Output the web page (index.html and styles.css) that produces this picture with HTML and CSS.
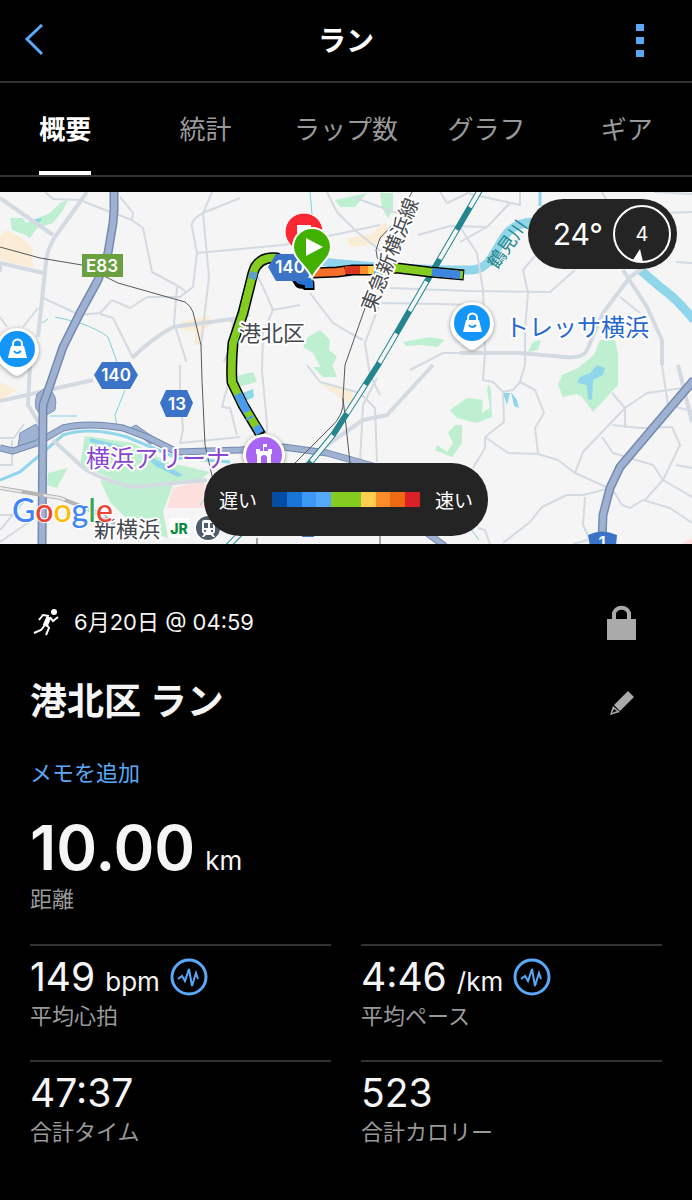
FILE: index.html
```html
<!DOCTYPE html>
<html lang="ja">
<head>
  <meta charset="UTF-8">
  <meta name="viewport" content="width=device-width, initial-scale=1.0">
  <title>ラン</title>
  <link rel="stylesheet" href="styles.css">
</head>
<body>
  <header class="topbar">
    <button class="icon-btn back" aria-label="戻る">
      <svg width="20" height="34" viewBox="0 0 20 34"><path d="M18 1 3 15l15 15" fill="none" stroke="#5aa9f8" stroke-width="3"/></svg>
    </button>
    <h1>ラン</h1>
    <button class="icon-btn more" aria-label="メニュー">
      <svg width="8" height="34" viewBox="0 0 8 34" fill="#5aa9f8"><path d="M0 0h8v7H0zM0 13h8v7H0zM0 26h8v7H0z"/></svg>
    </button>
  </header>

  <nav class="tabs">
    <a href="#summary" class="active">概要</a>
    <a href="#stats">統計</a>
    <a href="#laps">ラップ数</a>
    <a href="#graph">グラフ</a>
    <a href="#gear">ギア</a>
  </nav>

  <section class="map">
    <svg class="map-canvas" viewBox="0 192 692 352">
      <rect y="192" width="692" height="352" fill="#f5f5f6"/>

      <!-- parks and built-up areas -->
      <g fill="#fbecd5">
        <path d="M5 230 20 237 32 247 33 268 0 260V236zM0 382 17 390 0 400zM347 238 372 234 385 222 390 230 375 245 350 247zM181 322 210 315 210 326 202 330 200 345 195 345V331L181 330zM320 384 352 390 354 408 335 394z"/>
      </g>
      <g fill="#bfefd1">
        <path d="M10 218 23 218 26 223 50 213 60 203 68 200 63 210 53 223 37 228 30 238 23 234 12 230z"/>
        <path d="M85 436 133 443 167 462 210 472 200 480 133 488 80 465z"/>
        <path d="M100 480 133 488 173 485 163 512 168 538 133 525 110 502z"/>
        <path d="M48 473 68 468 60 482 57 488 47 485z"/>
        <path d="M335 200 367 193 355 207 340 207zM380 193H393V210L388 218 382 208z"/>
        <path d="M308 337 320 330 330 340 329 350 337 357 330 370 321 368 313 353 303 347z"/>
        <path d="M403 342 430 337 445 340 437 347 422 345 406 346z"/>
        <path d="M313 367H333L337 377 323 377zM228 378 253 372 257 382 237 387z"/>
        <path d="M600 340H615L618 353V385L593 412 582 397 577 394 563 397 558 385 562 375 578 368 594 355z"/>
        <path d="M533 342 541 340 538 350 528 352z"/>
        <path d="M467 398 483 400 482 413 490 408 487 390 489 384 491 390 492 417 477 423 457 418 450 410z"/>
        <path d="M455 425H462V443L452 457 435 450 437 445 447 452 453 443 448 433z"/>
      </g>
      <path d="M173 488 205 480V508H167z" fill="#fde0de"/>
      <path d="M681 544 692 538V544z" fill="#fde0de"/>

      <!-- water -->
      <g fill="#8fd6eb">
        <path d="M597 365 605 368 603 375 593 380 592 400 588 399 587 385 577 383 580 377 590 373z"/>
        <path d="M503 393H510L507 405zM511 392 517 400 519 408 514 406z"/>
        <path d="M90 438 127 447 126 450 90 442zM140 450 183 475 178 477 155 466zM240 394 253 389 254 397 243 402zM35 219 42 218 40 222 35 223z"/>
      </g>
      <g fill="none" stroke="#8fd6eb">
        <path d="M276 260Q310 257 330 263L377 267 443 270 470 270Q484 270 492 257L504 237Q512 224 532 222" stroke-width="9"/>
        <path d="M638 268 660 287Q675 297 694 320" stroke-width="9"/>
        <path d="M540 192V206M0 480 20 472 40 455 63 435Q90 426 127 437L177 458 230 462" stroke-width="3"/>
        <path d="M310 192 312 214M42 323 48 319M55 317 77 322Q100 330 108 337L117 362M125 390 115 415 117 427M50 416H77M248 275Q236 320 227 350M200 505 212 490M456 525 470 528 479 540" stroke="#7fd3da" stroke-width="1"/>
      </g>

      <!-- streets -->
      <g fill="none" stroke="#d3dae1" stroke-width="2" stroke-linejoin="round">
        <path d="M45 192 53 199 80 200 100 208 132 220 143 228 152 272 180 287 187 293"/>
        <path d="M120 197 125 203 133 213 132 220M0 317 7 327M23 327 38 308"/>
        <path d="M240 198 203 213Q190 220 192 227L197 253 193 287 180 297 147 297 130 308 112 300 100 313 80 315 43 298"/>
        <path d="M197 253 283 245 343 233 380 225M100 314 113 318 133 358M177 287 174 323 185 357 186 362"/>
        <path d="M212 192 203 213 209 277 201 345M233 320 231 345 224 362M233 365 222 407 230 408 237 435"/>
        <path d="M327 192 337 212 357 232 382 252M353 197 397 213 418 202M440 192 447 203 470 192M418 235 450 226 487 227"/>
        <path d="M250 262 263 287 273 310 263 333 262 370 267 425 266 440M230 322 250 315M273 310 300 305"/>
        <path d="M310 293 333 323 350 333 363 340M470 305 440 304 380 303 365 343 370 375 380 395"/>
        <path d="M390 288 470 291 550 292 575 270M410 370 443 353 460 353"/>
        <path d="M307 365 320 382 360 393 375 408 377 462M377 378 363 405 360 463"/>
        <path d="M460 242 487 227 510 203M470 194 520 205V192M460 227 477 253 483 290 485 353 483 380 493 382 503 392 504 422 485 437 485 448 473 468"/>
        <path d="M540 250 523 270 528 293 525 330 525 365 520 382 513 390 503 392M520 382 535 390 544 413 535 428 538 453"/>
        <path d="M485 437 508 453 538 454 558 460 575 473 613 490 622 505 630 508 643 500 670 508 692 523"/>
        <path d="M575 473 583 452 625 408 647 393 683 388M612 393 625 408V428M612 425 640 428 672 427 680 445 663 480 645 500"/>
        <path d="M602 437 613 453 653 465 663 480 692 497M676 465 692 468M668 405 692 411"/>
        <path d="M503 543 530 522 542 507 567 495 583 495 611 488M585 497 583 525 590 540M573 544 588 540"/>
        <path d="M662 365 668 405M654 192 692 194M660 213 692 212M676 262 692 263M620 297 640 313M602 192 608 203M478 528 485 530 490 544"/>
        <path d="M0 438H14L24 424M0 465H12V440M0 530 25 500M0 515H16M180 365V392L183 430 180 443 240 437M0 542 32 520"/>
      </g>
      <g fill="none" stroke="#d3dae1" stroke-width="4" stroke-linejoin="round">
        <path d="M87 192 55 237Q47 250 46 262L38 337M30 365 28 405 42 428M0 198 20 212 53 235"/>
        <path d="M0 263 43 273M132 358Q150 340 173 327L240 318M0 401 93 380M0 263V272"/>
        <path d="M53 440 77 462Q90 477 133 487L207 480M643 268 630 277 603 313 587 350Q583 359 565 357L520 353 460 353"/>
        <path d="M433 365 387 415 363 420 327 445 300 470M623 270 647 307 662 340V365M678 365 692 422M470 353H485"/>
      </g>

      <!-- expressways -->
      <g fill="none" stroke-linejoin="round">
        <path d="M45 388q14 4 10 22l-10 6q-14-4-8-22zM20 433 36 424 44 436 38 443 18 446zM130 428 136 425 160 442 150 444z" fill="#9fb2d1" stroke="#7d92b8"/>
        <path class="road-edge" d="M0 448 13 451 37 443 63 428Q87 422 123 428L147 437 177 452 240 450 283 447 327 453 380 468 420 528 445 546"/>
        <path class="road-fill" d="M0 448 13 451 37 443 63 428Q87 422 123 428L147 437 177 452 240 450 283 447 327 453 380 468 420 528 445 546"/>
        <path class="road-edge wide" d="M114 190V210L113 223 108 253 98 280 80 313 63 347 50 385 43 405 42 546"/>
        <path class="road-fill wide" d="M114 190V210L113 223 108 253 98 280 80 313 63 347 50 385 43 405 42 546"/>
        <path class="road-edge wide" d="M694 380 670 408 620 467 610 488 603 515 602 540"/>
        <path class="road-fill wide" d="M694 380 670 408 620 467 610 488 603 515 602 540"/>
      </g>

      <!-- railways -->
      <g fill="none">
        <path d="M0 247 40 258 82 265 118 283 185 302Q191 306 193 312L201 345 202 380 205 445 213 480M412 192 397 220 380 238 376 250 378 262M365 308 345 365 343 398Q345 415 330 428L295 463M343 398 350 463M380 536V544M257 538V544" stroke="#55585c"/>
        <path d="M0 488 60 498 100 514 140 540" stroke="#b5b5b5" stroke-width="4"/>
        <path d="M0 488 60 498 100 514 140 540" stroke="#eee" stroke-width="2" stroke-dasharray="22 22"/>
        <path d="M480 190 378 365 333 435 310 463 228 546" stroke="#23868f" stroke-width="6"/>
        <path d="M480 190 378 365 333 435 310 463 228 546" stroke="#f5f5f6" stroke-width="4" stroke-dasharray="34 26" stroke-dashoffset="14"/>
      </g>

      <!-- recorded track -->
      <g fill="none" stroke-linejoin="round">
        <path d="M464 275 430 272 397 268 373 270 353 270 337 272 312 273M309 290V284L300 283 289 266 277 258Q258 256 253 273L243 313 233 343Q231 365 232 382L243 405 261 435" stroke="#000" stroke-width="11"/>
        <g stroke-width="8">
          <path d="M463 275 430 272 397 268 373 270" stroke="#84cd20"/>
          <path d="M460 275 432 272" stroke="#3d85e0"/>
          <path d="M386 269 373 270" stroke="#54a9fb"/>
          <path d="M374 270H366" stroke="#ffce4e"/>
          <path d="M368 270H360" stroke="#fb8c2a"/>
          <path d="M360 270H345" stroke="#d9341f"/>
          <path d="M345 271 337 272 312 273" stroke="#f4702a"/>
          <path d="M309 288V282L300 280 289 268" stroke="#2472d2"/>
          <path d="M289 266 277 258Q258 256 253 273L243 313 233 343Q231 365 232 382L243 405 260 433" stroke="#84cd20"/>
          <path d="M238 394 247 412M249 417 250 419M256 426 260 433" stroke="#4b9af2"/>
          <path d="M254 272 252 279" stroke="#5d9ec8"/>
        </g>
      </g>

      <!-- road numbers -->
      <path d="M82 254H123V277H82z" fill="#6aa03f"/>
      <g fill="#3b74c6">
        <path d="M102 362H130L138 375 130 389H102L94 375zM166 390H187L193 403 187 417H166L160 403zM276 254H306L314 267 306 281H276L268 267zM588 535Q602 528 617 535L616 546H590zM302 533H314V537H302z"/>
      </g>
      <g class="shield">
        <text x="102" y="272">E83</text>
        <text x="116" y="381">140</text>
        <text x="177" y="410">13</text>
        <text x="290" y="273">140</text>
        <text x="602" y="549">1</text>
      </g>

      <!-- place names -->
      <g class="place">
        <text x="239" y="341" class="area">港北区</text>
        <text x="94" y="537" class="station">新横浜</text>
        <text x="505" y="336" class="shop">トレッサ横浜</text>
        <text x="86" y="467" class="arena">横浜アリーナ</text>
        <text transform="translate(374 313) rotate(-68)" class="line">東急新横浜線</text>
        <text transform="translate(497 270) rotate(-55)" class="river">鶴見川</text>
      </g>

      <!-- places -->
      <g id="shopPin">
        <path class="pin-shape" d="M472 302a22 22 0 0 1 18 34Q486 341 478 347Q472 353 466 347Q458 341 454 336a22 22 0 0 1 18-34z" fill="#fff"/>
        <circle cx="472" cy="323" r="18" fill="#1495f8"/>
        <path d="M466 320H479L482 332H463z" fill="#fff"/>
        <path d="M468 321V318a4 4 0 0 1 9 0V321" fill="none" stroke="#fff" stroke-width="2"/>
        <path d="M469 325q3 4 7 0" fill="none" stroke="#1495f8" stroke-width="2"/>
      </g>
      <use href="#shopPin" x="-455" y="26"/>
      <circle class="pin-shape" cx="264" cy="455" r="21" fill="#fff"/>
      <circle cx="264" cy="455" r="18" fill="#a864f2"/>
      <path d="M256 449H260V451H263V444H267V447H264V451H268V449H272V454H271V463H267V458a3 3 0 0 0-6 0V463H257V454H256z" fill="#fff"/>
      <rect x="169" y="518" width="21" height="20" rx="2" fill="#fff"/>
      <text x="179" y="534" class="jr">JR</text>
      <circle cx="208" cy="528" r="13" fill="#4d5d6e" stroke="#fff" stroke-width="2"/>
      <path d="M204 520H213Q215 520 215 523V532L213 534 215 537H213L211 535H206L204 537H202L204 534 202 532V523Q202 520 204 520zM204 523V528H208V523zM210 523V528H213V523zM204 530V532H206V530zM211 530V532H213V530z" fill="#fff" fill-rule="evenodd"/>

      <!-- finish and start -->
      <path d="M304 213a19 19 0 0 1 19 19c0 12-13 18-19 30c-6-12-19-18-19-30a19 19 0 0 1 19-19z" fill="#fb2732" stroke="#fff"/>
      <path d="M297 225H311V239H297z" fill="#fff"/>
      <path d="M312 228a19 19 0 0 1 19 19c0 12-13 18-19 31c-6-13-19-19-19-31a19 19 0 0 1 19-19z" fill="#42b000" stroke="#fff" stroke-width="2"/>
      <path d="M306 238 323 247 306 256z" fill="#fff"/>

      <text x="12" y="522" class="google"><tspan fill="#4285f4">G</tspan><tspan fill="#ea4335">o</tspan><tspan fill="#fbbc05">o</tspan><tspan fill="#4285f4">g</tspan><tspan fill="#34a853">l</tspan><tspan fill="#ea4335">e</tspan></text>
    </svg>

    <div class="weather">
      <span class="temp">24°</span>
      <span class="wind">
        <svg width="58" height="58" viewBox="0 0 58 58"><circle cx="29" cy="29" r="28" fill="none" stroke="#fff" stroke-width="2"/><path d="M27 44 20 55 30 57z" fill="#fff"/></svg>
        <b>4</b>
      </span>
    </div>

    <div class="legend">
      <span>遅い</span>
      <div class="scale"><i class="c1"></i><i class="c2"></i><i class="c3"></i><i class="c4"></i><i class="c5"></i><i class="c5"></i><i class="c6"></i><i class="c7"></i><i class="c8"></i><i class="c9"></i></div>
      <span>速い</span>
    </div>
  </section>

  <main id="summary">
    <div class="row date">
      <svg width="30" height="28" viewBox="-4 0 30 28">
        <circle cx="20" cy="4" r="3" fill="#fff"/>
        <path d="M15 9 11 18" fill="none" stroke="#fff" stroke-width="5"/>
        <path d="M11 17 7 22 0 25M12 16 15 20 12 27" fill="none" stroke="#fff" stroke-width="2"/>
        <path d="M15 8 9 7 5 12M16 9 19 13 24 9" fill="none" stroke="#fff" stroke-width="2"/>
      </svg>
      <time>6月20日 @ 04:59</time>
      <button class="icon-btn side" aria-label="プライバシー">
        <svg width="30" height="38" viewBox="0 0 30 38"><path d="M7 18V10a8 8 0 0 1 15 0V18" fill="none" stroke="#aaa" stroke-width="4"/><path d="M0 16H29V37H0z" fill="#aaa"/></svg>
      </button>
    </div>

    <div class="row name">
      <h2>港北区 ラン</h2>
      <button class="icon-btn side" aria-label="編集">
        <svg width="26" height="26" viewBox="0 0 26 26" fill="#aaa"><path d="M19 1 25 7 11 21 5 15z"/><path d="M4 16 11 22 1 25zM5 19 3 23 8 21z" fill-rule="evenodd"/></svg>
      </button>
    </div>

    <a href="#memo" class="memo">メモを追加</a>

    <div class="distance">
      <p><strong>10.00</strong> <span class="unit">km</span></p>
      <div class="label">距離</div>
    </div>

    <div class="stats">
      <div class="stat">
        <p>149 <span class="unit">bpm</span>
          <button class="icon-btn" aria-label="心拍グラフ"><svg class="pulse" width="38" height="38" viewBox="0 0 38 38"><circle cx="19" cy="19" r="17"/><path d="M8 21 12 18 15 23 19 11 22 28 26 15 28 21"/></svg></button>
        </p>
        <div class="label">平均心拍</div>
      </div>
      <div class="stat">
        <p>4:46 <span class="unit">/km</span>
          <button class="icon-btn" aria-label="ペースグラフ"><svg class="pulse" width="38" height="38" viewBox="0 0 38 38"><circle cx="19" cy="19" r="17"/><path d="M8 21 12 18 15 23 19 11 22 28 26 15 28 21"/></svg></button>
        </p>
        <div class="label">平均ペース</div>
      </div>
      <div class="stat">
        <p>47:37</p>
        <div class="label">合計タイム</div>
      </div>
      <div class="stat">
        <p>523</p>
        <div class="label">合計カロリー</div>
      </div>
    </div>
  </main>
</body>
</html>
```
FILE: styles.css
```css
* {
  box-sizing: border-box;
}
body {
  margin: 0;
  background: #000;
  color: #f5f5f5;
  font-family: Inter, "Noto Sans CJK JP", sans-serif;
  overflow-x: hidden;
}
h1, h2, p {
  margin: 0;
}
a {
  text-decoration: none;
}
svg {
  display: block;
}
.icon-btn {
  display: flex;
  align-items: center;
  justify-content: center;
  padding: 0;
  border: 0;
  background: none;
}

/* header */
.topbar {
  display: flex;
  align-items: center;
  justify-content: space-between;
  height: 83px;
  padding: 0 24px;
  border-bottom: 2px solid #333;
}
.topbar h1 {
  padding-bottom: 4px;
  font-size: 28px;
  font-weight: 700;
  color: #fff;
}
.back, .more {
  width: 56px;
  height: 56px;
}
.back {
  justify-content: flex-start;
}
.more {
  justify-content: center;
}
.tabs {
  display: grid;
  grid-template-columns: repeat(5, 1fr);
  justify-items: center;
  height: 94px;
  margin: 0 -5px 15px;
  border-bottom: 2px solid #333;
}
.tabs a {
  height: 92px;
  line-height: 94px;
  font-size: 26px;
  color: #999;
}
.tabs .active {
  border-bottom: 4px solid #fff;
  color: #fff;
  font-weight: 700;
}

/* map */
.map {
  position: relative;
}
.map-canvas {
  width: 100%;
  height: auto;
}
.road-edge {
  stroke: #7489b0;
  stroke-width: 7px;
}
.road-fill {
  stroke: #9fb2d1;
  stroke-width: 5px;
}
.road-edge.wide {
  stroke-width: 9px;
}
.road-fill.wide {
  stroke-width: 6px;
}
.pin-shape {
  filter: drop-shadow(0 1px 2px rgba(0, 0, 0, 0.4));
}
.shield {
  fill: #fff;
  font-size: 17px;
  font-weight: 600;
  text-anchor: middle;
}
.place {
  paint-order: stroke;
  stroke: #fff;
  stroke-width: 4px;
  stroke-linejoin: round;
}
.area, .station {
  font-size: 22px;
  fill: #45484d;
}
.shop {
  font-size: 24px;
  fill: #2468d0;
}
.arena {
  font-size: 24px;
  fill: #8a45cf;
}
.line {
  font-size: 20px;
  fill: #45484d;
}
.river {
  font-size: 18px;
  fill: #23868f;
  stroke: none;
}
.jr {
  font-size: 14px;
  font-weight: 800;
  fill: #0b8a43;
  text-anchor: middle;
}
.google {
  font-family: Lato, sans-serif;
  font-size: 32px;
  font-weight: 500;
  paint-order: stroke;
  stroke: #fff;
  stroke-width: 2px;
}
.weather, .legend {
  position: absolute;
  display: flex;
  align-items: center;
  background: #242424;
  color: #fff;
}
.weather {
  top: 7px;
  right: 15px;
  height: 70px;
  padding: 0 6px 0 25px;
  gap: 10px;
  border-radius: 35px;
}
.temp {
  font-size: 30px;
}
.wind {
  display: grid;
  place-items: center;
}
.wind > * {
  grid-area: 1 / 1;
}
.wind b {
  font-size: 20px;
  font-weight: 400;
}
.legend {
  bottom: 8px;
  left: 50%;
  transform: translateX(-50%);
  height: 73px;
  padding: 0 15px;
  gap: 15px;
  border-radius: 36px;
  font-size: 19px;
  white-space: nowrap;
}
.scale {
  display: grid;
  grid-template-columns: repeat(10, 1fr);
  width: 148px;
  height: 15px;
}
.c1 { background: #044da3; }
.c2 { background: #1976d8; }
.c3 { background: #3d97f5; }
.c4 { background: #54a9fb; }
.c5 { background: #84cd20; }
.c6 { background: #ffce4e; }
.c7 { background: #fb8c2a; }
.c8 { background: #ee6912; }
.c9 { background: #d92127; }

/* summary */
main {
  padding: 48px 30px;
}
.row {
  display: flex;
  align-items: center;
}
.side {
  width: 80px;
  height: 60px;
  margin-left: auto;
}
.date {
  height: 60px;
  gap: 14px;
  font-size: 22px;
}
.date time {
  padding-bottom: 4px;
}
.name {
  height: 102px;
}
.name h2 {
  padding-bottom: 8px;
  font-size: 37px;
  font-weight: 700;
}
.memo {
  display: block;
  color: #5aa9f8;
  font-size: 22px;
  line-height: 38px;
}
.distance {
  height: 152px;
  padding-top: 24px;
}
.distance p {
  display: flex;
  align-items: baseline;
  gap: 10px;
  margin-bottom: 4px;
  line-height: 64px;
}
.distance strong {
  font-size: 62px;
  font-weight: 600;
}
.unit {
  font-size: 26px;
  line-height: 30px;
}
.label {
  color: #999;
  font-size: 22px;
  line-height: 30px;
}
.stats {
  display: grid;
  grid-template-columns: 1fr 1fr;
  column-gap: 30px;
}
.stat {
  height: 116px;
  padding-top: 7px;
  border-top: 2px solid #333;
}
.stat p {
  display: flex;
  align-items: baseline;
  gap: 10px;
  height: 48px;
  font-size: 39px;
  line-height: 48px;
}
.stat .icon-btn {
  align-self: flex-start;
  padding-top: 5px;
}
.pulse {
  fill: none;
  stroke: #5aa9f8;
  stroke-width: 3px;
}
.pulse path {
  stroke-width: 2px;
}
```
